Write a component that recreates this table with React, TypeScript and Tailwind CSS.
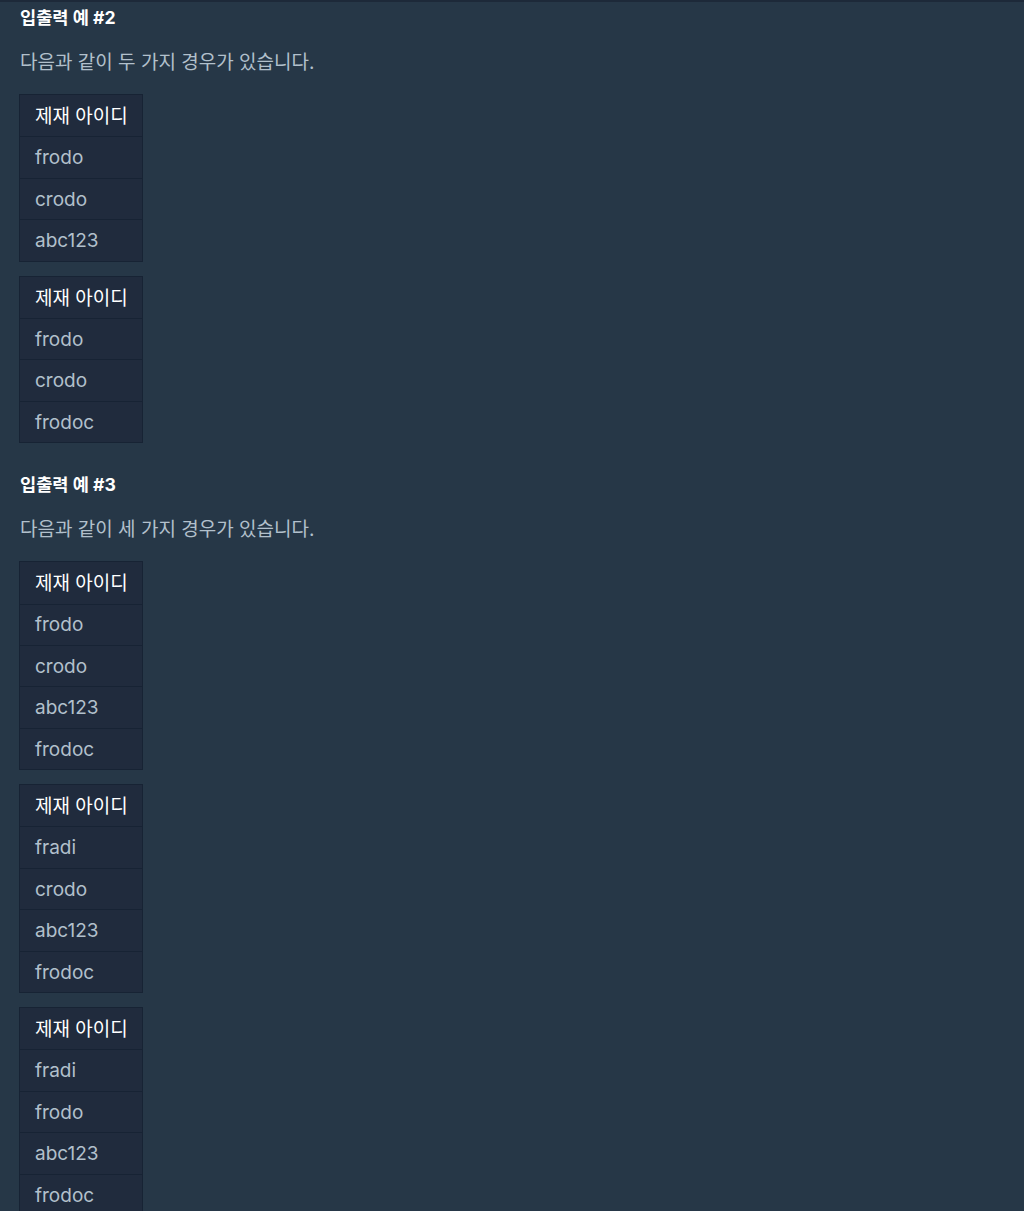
const font = "font-['Inter','Noto_Sans_CJK_KR',sans-serif]";

function IdTable({ ids }: { ids: string[] }) {
  return (
    <div className="-ml-px w-[124px] border border-[#172334] bg-[#202b3d] text-[19px]">
      <div className="flex h-[41.4px] items-center whitespace-nowrap px-[15px] pt-[3px] text-white">제재 아이디</div>
      {ids.map((id, i) => (
        <div key={i} className="flex h-[41.4px] items-center border-t border-[#172334] px-[15px] pt-[2px] text-[#b2c0cc]">
          {id}
        </div>
      ))}
    </div>
  );
}

function Example({ title, desc, tables }: { title: string; desc: string; tables: string[][] }) {
  return (
    <div>
      <h5 className="text-[17.6px] font-bold leading-[24px] text-white">{title}</h5>
      <p className="mt-[20px] text-[19px] leading-[26px] text-[#b2c0cc]">{desc}</p>
      <div className="mt-[18px] flex flex-col gap-[14px]">
        {tables.map((t, i) => (
          <IdTable key={i} ids={t} />
        ))}
      </div>
    </div>
  );
}

export default function App() {
  return (
    <div className={`min-h-[1211px] border-t-2 border-[#1d2939] bg-[#263747] px-[20px] pt-[4px] ${font}`}>
      <div className="flex flex-col gap-[30px]">
        <Example
          title="입출력 예 #2"
          desc="다음과 같이 두 가지 경우가 있습니다."
          tables={[
            ["frodo", "crodo", "abc123"],
            ["frodo", "crodo", "frodoc"],
          ]}
        />
        <Example
          title="입출력 예 #3"
          desc="다음과 같이 세 가지 경우가 있습니다."
          tables={[
            ["frodo", "crodo", "abc123", "frodoc"],
            ["fradi", "crodo", "abc123", "frodoc"],
            ["fradi", "frodo", "abc123", "frodoc"],
          ]}
        />
      </div>
    </div>
  );
}
